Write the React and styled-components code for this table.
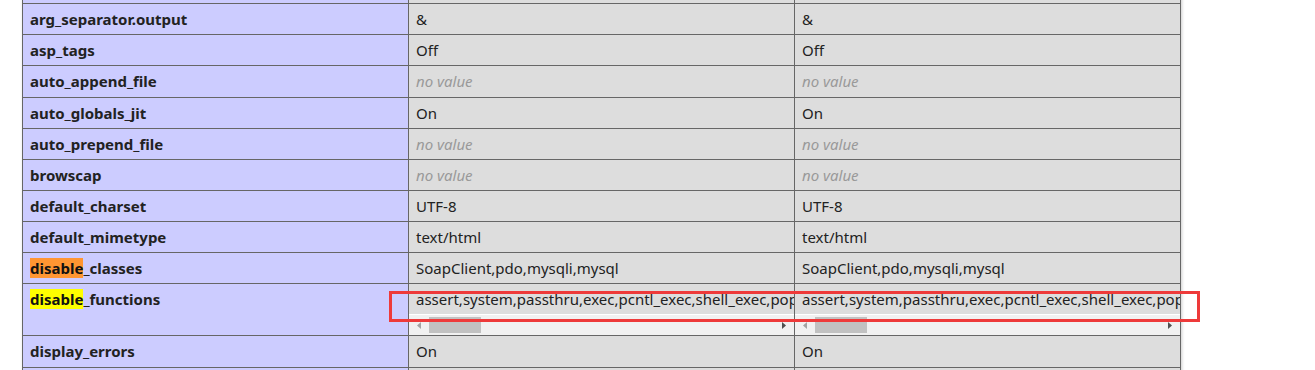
import React from 'react'
import styled, { createGlobalStyle } from 'styled-components'

const GlobalStyle = createGlobalStyle`
  html, body {
    margin: 0;
    padding: 0;
    background: #fff;
    overflow: hidden;
  }
  body {
    font-family: "Noto Sans", "Open Sans", sans-serif;
    color: #222;
  }
`

const Page = styled.div`
  position: relative;
  display: flow-root;
  padding-left: 22px;
`

const Table = styled.table`
  border-collapse: collapse;
  table-layout: fixed;
  width: 1158px;
  margin-top: -28px;
  box-shadow: 1px 2px 3px #ccc;
`

const Cell = styled.td`
  border: 1px solid #666;
  font-size: 15px;
  line-height: 20.125px;
  padding: 5px 7px;
  vertical-align: top;
  white-space: nowrap;
  overflow: hidden;
`

const KeyCell = styled(Cell)`
  background: #ccccff;
  font-weight: bold;
  color: #222;
`

const ValueCell = styled(Cell)`
  background: #dddddd;
  padding: ${(p) => (p.$scroll ? '0' : '5px 7px')};
`

const NoValue = styled.i`
  color: #999;
`

const Hit = styled.span`
  background: ${(p) => (p.$tone === 'orange' ? '#ff9632' : '#ffff00')};
  color: #111;
`

const ScrollText = styled.div`
  padding: 5px 7px;
  overflow: hidden;
  white-space: nowrap;
`

const ScrollBar = styled.div`
  display: flex;
  height: 21px;
  box-sizing: border-box;
  border-top: 1px solid #fff;
  background: #f1f1f1;
`

const ArrowButton = styled.div`
  width: 20px;
  flex: none;
  display: flex;
  align-items: center;
  justify-content: center;
`

const Track = styled.div`
  flex: 1;
  padding: 2px 0;
  box-sizing: border-box;
`

const Thumb = styled.div`
  width: 52px;
  height: 100%;
  background: #c1c1c1;
`

const Annotation = styled.div`
  position: absolute;
  left: 389px;
  top: 291px;
  width: 811px;
  height: 31px;
  box-sizing: border-box;
  border: 3px solid #ee3a3a;
  pointer-events: none;
`

const disabledFunctions =
  'assert,system,passthru,exec,pcntl_exec,shell_exec,popen,proc_open,pcntl_alarm,pcntl_fork,pcntl_waitpid,pcntl_wait,pcntl_signal,pcntl_signal_dispatch,pcntl_getpriority,pcntl_setpriority,pcntl_wifexited,pcntl_wifstopped,pcntl_wifsignaled,pcntl_wexitstatus,pcntl_wtermsig,pcntl_wstopsig,pcntl_get_last_error,pcntl_strerror,pcntl_sigprocmask,pcntl_sigwaitinfo,pcntl_sigtimedwait,imap_open,apache_setenv,putenv,mail,error_log,dl,ini_set,ini_alter,ini_restore,chroot,chgrp,chown,symlink,link,syslog,readlink,stream_socket_server'

function Arrow({ dir, active }) {
  const points = dir === 'left' ? '4,0 4,7 0,3.5' : '0,0 0,7 4,3.5'
  return (
    <svg width="4" height="7" viewBox="0 0 4 7">
      <polygon points={points} fill={active ? '#505050' : '#a3a3a3'} />
    </svg>
  )
}

function ScrollValue({ text }) {
  return (
    <>
      <ScrollText>{text}</ScrollText>
      <ScrollBar>
        <ArrowButton>
          <Arrow dir="left" />
        </ArrowButton>
        <Track>
          <Thumb />
        </Track>
        <ArrowButton>
          <Arrow dir="right" active />
        </ArrowButton>
      </ScrollBar>
    </>
  )
}

function Value({ value }) {
  if (value === null) return <NoValue>no value</NoValue>
  return value
}

const rows = [
  { key: 'arg_separator.input', local: '&', master: '&' },
  { key: 'arg_separator.output', local: '&', master: '&' },
  { key: 'asp_tags', local: 'Off', master: 'Off' },
  { key: 'auto_append_file', local: null, master: null },
  { key: 'auto_globals_jit', local: 'On', master: 'On' },
  { key: 'auto_prepend_file', local: null, master: null },
  { key: 'browscap', local: null, master: null },
  { key: 'default_charset', local: 'UTF-8', master: 'UTF-8' },
  { key: 'default_mimetype', local: 'text/html', master: 'text/html' },
  {
    key: 'disable_classes',
    hit: 'orange',
    local: 'SoapClient,pdo,mysqli,mysql',
    master: 'SoapClient,pdo,mysqli,mysql',
  },
  {
    key: 'disable_functions',
    hit: 'yellow',
    scroll: true,
    local: disabledFunctions,
    master: disabledFunctions,
  },
  { key: 'display_errors', local: 'On', master: 'On' },
  { key: 'doc_root', local: null, master: null },
]

function KeyName({ row }) {
  if (!row.hit) return row.key
  return (
    <>
      <Hit $tone={row.hit}>disable</Hit>
      {row.key.slice('disable'.length)}
    </>
  )
}

export default function App() {
  return (
    <>
      <GlobalStyle />
      <Page>
        <Table>
          <colgroup>
            <col style={{ width: 386 }} />
            <col style={{ width: 386 }} />
            <col style={{ width: 386 }} />
          </colgroup>
          <tbody>
            {rows.map((row) => (
              <tr key={row.key}>
                <KeyCell>
                  <KeyName row={row} />
                </KeyCell>
                {[row.local, row.master].map((v, i) => (
                  <ValueCell key={i} $scroll={row.scroll}>
                    {row.scroll ? <ScrollValue text={v} /> : <Value value={v} />}
                  </ValueCell>
                ))}
              </tr>
            ))}
          </tbody>
        </Table>
        <Annotation />
      </Page>
    </>
  )
}
